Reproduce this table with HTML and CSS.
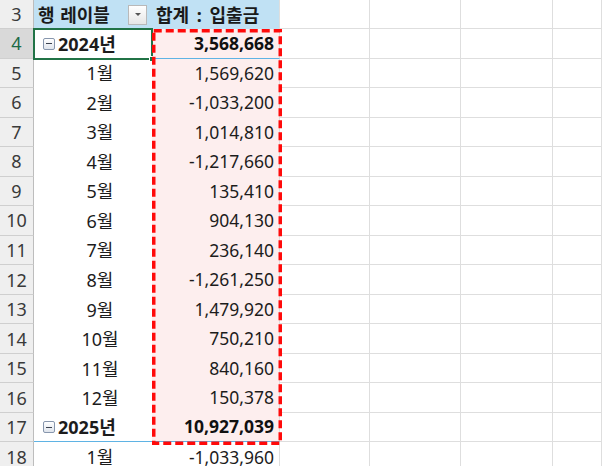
FILE: index.html
```html
<!DOCTYPE html>
<html lang="ko">
<head>
<meta charset="utf-8">
<title>피벗 테이블</title>
<link rel="stylesheet" href="styles.css">
</head>
<body>
<div class="sheet">
  <div class="rh">3</div>
  <div class="a hdr"><span>행 레이블</span><span class="dd"><span class="tri"></span></span></div>
  <div class="b hdr">합계 : 입출금</div>
  <div class="g"></div><div class="g"></div><div class="g"></div><div class="g"></div>

  <div class="rh sel">4</div>
  <div class="a year"><span class="mbox"><span class="minus"></span></span>2024년</div>
  <div class="b num tot">3,568,668</div>
  <div class="g"></div><div class="g"></div><div class="g"></div><div class="g"></div>

  <div class="rh">5</div><div class="a mon">1월</div><div class="b num pink">1,569,620</div>
  <div class="g"></div><div class="g"></div><div class="g"></div><div class="g"></div>
  <div class="rh">6</div><div class="a mon">2월</div><div class="b num pink">-1,033,200</div>
  <div class="g"></div><div class="g"></div><div class="g"></div><div class="g"></div>
  <div class="rh">7</div><div class="a mon">3월</div><div class="b num pink">1,014,810</div>
  <div class="g"></div><div class="g"></div><div class="g"></div><div class="g"></div>
  <div class="rh">8</div><div class="a mon">4월</div><div class="b num pink">-1,217,660</div>
  <div class="g"></div><div class="g"></div><div class="g"></div><div class="g"></div>
  <div class="rh">9</div><div class="a mon">5월</div><div class="b num pink">135,410</div>
  <div class="g"></div><div class="g"></div><div class="g"></div><div class="g"></div>
  <div class="rh">10</div><div class="a mon">6월</div><div class="b num pink">904,130</div>
  <div class="g"></div><div class="g"></div><div class="g"></div><div class="g"></div>
  <div class="rh">11</div><div class="a mon">7월</div><div class="b num pink">236,140</div>
  <div class="g"></div><div class="g"></div><div class="g"></div><div class="g"></div>
  <div class="rh">12</div><div class="a mon">8월</div><div class="b num pink">-1,261,250</div>
  <div class="g"></div><div class="g"></div><div class="g"></div><div class="g"></div>
  <div class="rh">13</div><div class="a mon">9월</div><div class="b num pink">1,479,920</div>
  <div class="g"></div><div class="g"></div><div class="g"></div><div class="g"></div>
  <div class="rh">14</div><div class="a mon">10월</div><div class="b num pink">750,210</div>
  <div class="g"></div><div class="g"></div><div class="g"></div><div class="g"></div>
  <div class="rh">15</div><div class="a mon">11월</div><div class="b num pink">840,160</div>
  <div class="g"></div><div class="g"></div><div class="g"></div><div class="g"></div>
  <div class="rh">16</div><div class="a mon">12월</div><div class="b num pink">150,378</div>
  <div class="g"></div><div class="g"></div><div class="g"></div><div class="g"></div>

  <div class="rh">17</div>
  <div class="a year yb"><span class="mbox"><span class="minus"></span></span>2025년</div>
  <div class="b num tot yb">10,927,039</div>
  <div class="g"></div><div class="g"></div><div class="g"></div><div class="g"></div>

  <div class="rh">18</div><div class="a mon">1월</div><div class="b num">-1,033,960</div>
  <div class="g"></div><div class="g"></div><div class="g"></div><div class="g"></div>

  <div class="selbox"><span class="handle"></span></div>
  <svg class="ants" width="130" height="416" viewBox="0 0 130 416">
    <rect x="1.75" y="1.75" width="126.5" height="412.5" fill="none" stroke="#ff0a0a" stroke-width="3.5" stroke-dasharray="8 4"/>
  </svg>
</div>
</body>
</html>
```
FILE: styles.css
```css
* { box-sizing: border-box; }
html, body { margin: 0; padding: 0; background: #fff; }
body {
  font-family: "Noto Sans", "Noto Sans CJK KR", sans-serif;
  font-size: 17.5px;
  color: #1c1c1c;
  overflow: hidden;
}
.sheet {
  position: relative;
  display: grid;
  grid-template-columns: 34px 118px 128px 90px 91px 92px 49px;
  grid-template-rows: 29px repeat(14, 29.54px) 30px;
  width: 602px;
  height: 466px;
  overflow: hidden;
}
.sheet > div {
  display: flex;
  align-items: center;
  white-space: nowrap;
  line-height: 1;
}
.rh {
  justify-content: center;
  background: #efefef;
  color: #3a3a3a;
  font-size: 18px;
  border-right: 1px solid #bdbdbd;
  border-bottom: 1px solid #cfcfcf;
}
.rh.sel {
  background: #d9d9d9;
  color: #1d6b46;
}
.g {
  border-right: 1px solid #dedede;
  border-bottom: 1px solid #dedede;
}
.a { background: #fff; }
.b { background: #fff; border-right: 1px solid #dedede; }
.hdr {
  background: #c0e1f4;
  font-weight: 700;
  font-size: 18px;
  color: #1a1a1a;
}
.a.hdr { padding-left: 4px; justify-content: space-between; padding-right: 5px; word-spacing: 1px; }
.b.hdr { padding-left: 4px; border-right: 1px solid #dedede; word-spacing: 3px; }
.dd {
  width: 19px;
  height: 20px;
  border: 1px solid #b9b9b9;
  background: linear-gradient(#ffffff, #e6e6e6);
  display: flex;
  align-items: center;
  justify-content: center;
}
.tri {
  width: 0;
  height: 0;
  border-left: 3px solid transparent;
  border-right: 3px solid transparent;
  border-top: 3px solid #555;
}
.year {
  font-weight: 700;
  font-size: 18px;
  padding-left: 9px;
}
.mbox {
  width: 12px;
  height: 12px;
  margin-right: 3px;
  border: 1px solid #8796ad;
  border-radius: 2px;
  background: linear-gradient(#ffffff, #dfe4ec);
  display: flex;
  align-items: center;
  justify-content: center;
}
.minus {
  width: 6px;
  height: 1px;
  background: #3b4250;
}
.mon {
  justify-content: center;
  padding-left: 14px;
  font-size: 18px;
}
.num {
  justify-content: flex-end;
  padding-right: 5px;
}
.pink, .tot { background: #fdeeee; }
.tot { font-weight: 700; color: #111; border-bottom: 1px solid #5fb3e4; }
.a.yb { border-bottom: 1px solid #5fb3e4; }
.selbox {
  position: absolute;
  left: 33px;
  top: 28px;
  width: 120px;
  height: 32px;
  border: 2px solid #217346;
}
.handle {
  position: absolute;
  right: -4px;
  bottom: -4px;
  width: 6px;
  height: 6px;
  background: #217346;
  border: 1px solid #fff;
}
.ants {
  position: absolute;
  left: 152px;
  top: 29px;
}
```
